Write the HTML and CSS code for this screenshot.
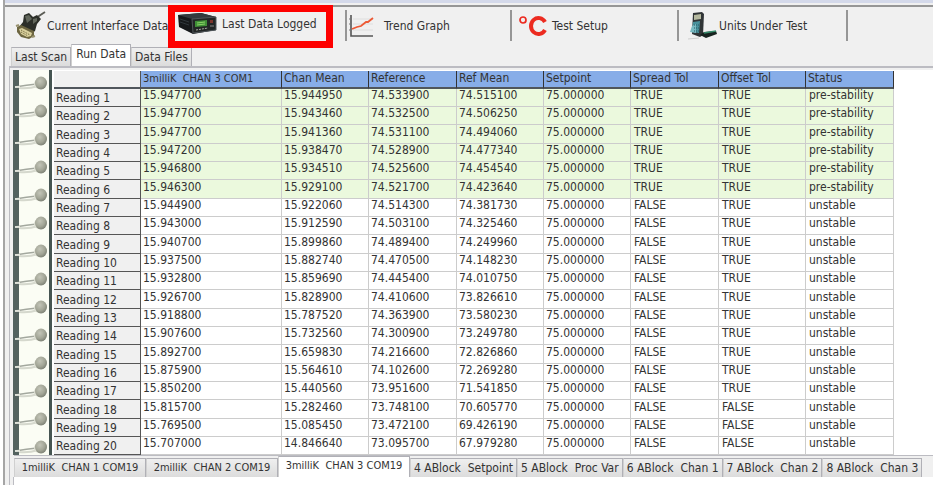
FILE: index.html
```html
<!DOCTYPE html>
<html lang="en">
<head>
<meta charset="utf-8">
<title>Run Data</title>
<link rel="stylesheet" href="styles.css">
</head>
<body>
<main class="window">
  <nav class="toolbar" aria-label="Views">
    <button class="tool tool-first" type="button">
      <svg width="32" height="30" viewBox="0 0 32 30" aria-hidden="true">
        <path d="M21 9 24 5 30 1" fill="none" stroke="#5b5c55" stroke-width="1.8"/>
        <path d="M9 4 14 2 18 6 22 4 26 8 22 13 20 20 16 23 4 16 8 11Z" fill="#2c2f29"/>
        <path d="M10 5 14 4 17 8 12 12Z" fill="#62675c"/>
        <path d="M18 8 22 7 22 10 18 13Z" fill="#62675c"/>
        <path d="M2 16 6 14 19 20 19 25 14 28 6 26 2 21Z" fill="#6d6641"/>
        <path d="M4 18 7 17 17 22 16 25 12 26 6 23Z" fill="#d8cf9c"/>
        <path d="M6 19 15 24M6 21 13 25" stroke="#6a6138" stroke-dasharray="1 1"/>
        <path d="M1 15 4 14M17 26l3-1" stroke="#98926f" stroke-width="2"/>
      </svg>
      <span>Current Interface Data</span>
    </button>
    <button class="tool tool-logged" type="button">
      <svg width="40" height="22" viewBox="0 0 40 22" aria-hidden="true">
        <path d="M1 2 24 0 39 4 39 17 16 21 2 14Z" fill="#16191b"/>
        <path d="M1 2 24 0 39 4 15 6Z" fill="#343a3e"/>
        <path d="M15 6 39 4 39 17 16 20Z" fill="#222625" stroke="#50565a"/>
        <path d="M18 8 30 7 30 13 18 14Z" fill="#3f8f36"/>
        <path d="M20 10 28 9M20 12 28 11" stroke="#8ad266"/>
        <path d="M19 17 31 15" stroke="#a7aaa0" stroke-dasharray="2 1"/>
        <path d="M33 7h3v3h-3z" fill="#7c342a"/>
        <path d="M33 13h4" stroke="#888"/>
        <path d="M3 6 12 9M3 9 12 12" stroke="#30383c"/>
      </svg>
      <span>Last Data Logged</span>
    </button>
    <button class="tool tool-graph" type="button">
      <svg width="26" height="24" viewBox="0 0 26 24" aria-hidden="true">
        <path d="M4 5H24M4 10H24M4 16H24" stroke="#dedede"/>
        <path d="M2 1V22H24" fill="none" stroke="#555" stroke-width="1.6"/>
        <path d="M0 5H2M0 10H2M0 16H2" stroke="#777"/>
        <path d="M3 15 8 13 12 12 17 8 19 8 24 4" fill="none" stroke="#ed5a36" stroke-width="1.8"/>
      </svg>
      <span>Trend Graph</span>
    </button>
    <button class="tool tool-setup" type="button">
      <svg width="30" height="22" viewBox="0 0 30 22" aria-hidden="true">
        <circle cx="5" cy="5" r="3" fill="none" stroke="#ec2b20" stroke-width="1.7"/>
        <path d="M27 7A7.5 8 0 1 0 27 15" fill="none" stroke="#ec2b20" stroke-width="4"/>
      </svg>
      <span>Test Setup</span>
    </button>
    <button class="tool tool-units" type="button">
      <svg width="32" height="30" viewBox="0 0 32 30" aria-hidden="true">
        <path d="M1 28 12 27" stroke="#cfcfcf"/>
        <path d="M6 2 15 1 17 3 16 24 13 26 5 23Z" fill="#303436"/>
        <path d="M7 4 14 3 14 8 7 9Z" fill="#b5b99f"/>
        <path d="M6 11 13 10 12 22 5 21Z" fill="#47909b"/>
        <path d="M5 15 9 13 9 22 3 21Z" fill="#79bac2"/>
        <path d="M7 14h5M7 17h5M7 20h5" stroke="#245b66" stroke-dasharray="1 1"/>
        <path d="M13 24 17 21 29 20 30 23 19 27Z" fill="#17231f"/>
        <path d="M17 22 29 20" stroke="#368a6b" stroke-width="1.5"/>
      </svg>
      <span>Units Under Test</span>
    </button>
    <div class="highlight"></div>
  </nav>

  <div class="tabs tabs-top" role="tablist">
    <button class="tab" type="button" role="tab">Last Scan</button>
    <button class="tab active" type="button" role="tab" aria-selected="true">Run Data</button>
    <button class="tab" type="button" role="tab">Data Files</button>
  </div>

  <section class="panel">
    <div class="sheet">
      <svg class="binder" aria-hidden="true">
        <defs>
          <radialGradient id="ball" cx="40%" cy="35%" r="70%">
            <stop offset="0" stop-color="#c3c5b8"/>
            <stop offset="0.6" stop-color="#a2a596"/>
            <stop offset="1" stop-color="#787c70"/>
          </radialGradient>
          <pattern id="ring" width="39" height="28" patternUnits="userSpaceOnUse">
            <rect width="39" height="28" fill="#fbfdf4"/>
            <rect width="6" height="28" fill="#53625f"/>
            <rect x="36" width="3" height="28" fill="#465552"/>
            <path d="M6 18Q16 19 25 16" fill="none" stroke="#d5d8cd" stroke-width="2"/>
            <path d="M2 17Q14 15 24 14" fill="none" stroke="#a3a89e" stroke-width="1.5"/>
            <path d="M2 17H7" stroke="#f5f7ef" stroke-width="1.5"/>
            <ellipse cx="26" cy="14" rx="5" ry="5" fill="#dcded2"/>
            <ellipse cx="28" cy="13" rx="6" ry="6.5" fill="url(#ball)"/>
          </pattern>
        </defs>
        <rect width="39" height="100%" fill="url(#ring)"/>
      </svg>
      <table class="grid">
        <colgroup><col class="c-name"><col class="c-chan"><col class="c-a"><col class="c-b"><col class="c-a"><col class="c-a"><col class="c-b"><col class="c-a"><col class="c-b"></colgroup>
        <thead><tr><td></td><th class="channel" scope="col">3milliK  CHAN 3 COM1</th><th scope="col">Chan Mean</th><th scope="col">Reference</th><th scope="col">Ref Mean</th><th scope="col">Setpoint</th><th scope="col">Spread Tol</th><th scope="col">Offset Tol</th><th scope="col">Status</th></tr></thead>
        <tbody>
        <tr class="ok"><th scope="row">Reading 1</th><td>15.947700</td><td>15.944950</td><td>74.533900</td><td>74.515100</td><td>75.000000</td><td>TRUE</td><td>TRUE</td><td>pre-stability</td></tr>
        <tr class="ok"><th scope="row">Reading 2</th><td>15.947700</td><td>15.943460</td><td>74.532500</td><td>74.506250</td><td>75.000000</td><td>TRUE</td><td>TRUE</td><td>pre-stability</td></tr>
        <tr class="ok"><th scope="row">Reading 3</th><td>15.947700</td><td>15.941360</td><td>74.531100</td><td>74.494060</td><td>75.000000</td><td>TRUE</td><td>TRUE</td><td>pre-stability</td></tr>
        <tr class="ok"><th scope="row">Reading 4</th><td>15.947200</td><td>15.938470</td><td>74.528900</td><td>74.477340</td><td>75.000000</td><td>TRUE</td><td>TRUE</td><td>pre-stability</td></tr>
        <tr class="ok"><th scope="row">Reading 5</th><td>15.946800</td><td>15.934510</td><td>74.525600</td><td>74.454540</td><td>75.000000</td><td>TRUE</td><td>TRUE</td><td>pre-stability</td></tr>
        <tr class="ok"><th scope="row">Reading 6</th><td>15.946300</td><td>15.929100</td><td>74.521700</td><td>74.423640</td><td>75.000000</td><td>TRUE</td><td>TRUE</td><td>pre-stability</td></tr>
        <tr><th scope="row">Reading 7</th><td>15.944900</td><td>15.922060</td><td>74.514300</td><td>74.381730</td><td>75.000000</td><td>FALSE</td><td>TRUE</td><td>unstable</td></tr>
        <tr><th scope="row">Reading 8</th><td>15.943000</td><td>15.912590</td><td>74.503100</td><td>74.325460</td><td>75.000000</td><td>FALSE</td><td>TRUE</td><td>unstable</td></tr>
        <tr><th scope="row">Reading 9</th><td>15.940700</td><td>15.899860</td><td>74.489400</td><td>74.249960</td><td>75.000000</td><td>FALSE</td><td>TRUE</td><td>unstable</td></tr>
        <tr><th scope="row">Reading 10</th><td>15.937500</td><td>15.882740</td><td>74.470500</td><td>74.148230</td><td>75.000000</td><td>FALSE</td><td>TRUE</td><td>unstable</td></tr>
        <tr><th scope="row">Reading 11</th><td>15.932800</td><td>15.859690</td><td>74.445400</td><td>74.010750</td><td>75.000000</td><td>FALSE</td><td>TRUE</td><td>unstable</td></tr>
        <tr><th scope="row">Reading 12</th><td>15.926700</td><td>15.828900</td><td>74.410600</td><td>73.826610</td><td>75.000000</td><td>FALSE</td><td>TRUE</td><td>unstable</td></tr>
        <tr><th scope="row">Reading 13</th><td>15.918800</td><td>15.787520</td><td>74.363900</td><td>73.580230</td><td>75.000000</td><td>FALSE</td><td>TRUE</td><td>unstable</td></tr>
        <tr><th scope="row">Reading 14</th><td>15.907600</td><td>15.732560</td><td>74.300900</td><td>73.249780</td><td>75.000000</td><td>FALSE</td><td>TRUE</td><td>unstable</td></tr>
        <tr><th scope="row">Reading 15</th><td>15.892700</td><td>15.659830</td><td>74.216600</td><td>72.826860</td><td>75.000000</td><td>FALSE</td><td>TRUE</td><td>unstable</td></tr>
        <tr><th scope="row">Reading 16</th><td>15.875900</td><td>15.564610</td><td>74.102600</td><td>72.269280</td><td>75.000000</td><td>FALSE</td><td>TRUE</td><td>unstable</td></tr>
        <tr><th scope="row">Reading 17</th><td>15.850200</td><td>15.440560</td><td>73.951600</td><td>71.541850</td><td>75.000000</td><td>FALSE</td><td>TRUE</td><td>unstable</td></tr>
        <tr><th scope="row">Reading 18</th><td>15.815700</td><td>15.282460</td><td>73.748100</td><td>70.605770</td><td>75.000000</td><td>FALSE</td><td>FALSE</td><td>unstable</td></tr>
        <tr><th scope="row">Reading 19</th><td>15.769500</td><td>15.085450</td><td>73.472100</td><td>69.426190</td><td>75.000000</td><td>FALSE</td><td>FALSE</td><td>unstable</td></tr>
        <tr><th scope="row">Reading 20</th><td>15.707000</td><td>14.846640</td><td>73.095700</td><td>67.979280</td><td>75.000000</td><td>FALSE</td><td>FALSE</td><td>unstable</td></tr>
        </tbody>
      </table>
    </div>
    <div class="tabs tabs-bottom" role="tablist">
      <button class="tab channel" type="button" role="tab">1milliK  CHAN 1 COM19</button>
      <button class="tab channel" type="button" role="tab">2milliK  CHAN 2 COM19</button>
      <button class="tab channel active" type="button" role="tab" aria-selected="true">3milliK  CHAN 3 COM19</button>
      <button class="tab" type="button" role="tab">4 ABlock  Setpoint</button>
      <button class="tab" type="button" role="tab">5 ABlock  Proc Var</button>
      <button class="tab" type="button" role="tab">6 ABlock  Chan 1</button>
      <button class="tab" type="button" role="tab">7 ABlock  Chan 2</button>
      <button class="tab" type="button" role="tab">8 ABlock  Chan 3</button>
    </div>
    <div class="page"></div>
  </section>
</main>
</body>
</html>
```
FILE: styles.css
```css
* { box-sizing: border-box; }

body {
  margin: 0;
  min-height: 100vh;
  display: flex;
  padding: 0 7px 0 3px;
  background: #fff;
  font: 12px/16px "DejaVu Sans Condensed", "DejaVu Sans", sans-serif;
  color: #333;
}

button {
  font: inherit;
  color: inherit;
  border: 0;
  padding: 0;
  background: none;
  white-space: pre;
}

.window {
  flex: 1;
  min-width: 0;
  display: flex;
  flex-direction: column;
  border-left: 2px solid #a5a5a5;
  background: #f0f0f0;
}

.window::before {
  content: "";
  height: 7px;
  background: linear-gradient(#d4d9ea 3px, #f0f0f0 3px, #f0f0f0 5px, #969696 5px);
}

.toolbar {
  position: relative;
  display: flex;
  height: 37px;
  padding-top: 3px;
}

.tool {
  display: flex;
  align-items: center;
  height: 31px;
  border-right: 2px solid #969696;
}

.tool-first { width: 170px; padding-left: 10px; border: 0; }
.tool-logged { width: 172px; padding: 0 0 4px 2px; gap: 5px; }
.tool-graph { width: 165px; padding-left: 2px; gap: 9px; }
.tool-setup { width: 167px; padding-left: 6px; gap: 4px; }
.tool-units { width: 169px; padding-left: 8px; }

.tool svg { flex: none; }

.highlight {
  position: absolute;
  left: 163px;
  top: -2px;
  width: 165px;
  height: 43px;
  border: 7px solid #fe0000;
}

.tabs {
  display: flex;
  align-items: flex-end;
}

.tab {
  height: 19px;
  border: 1px solid #b0b0b6;
  border-left-color: #d0d0d0;
  border-bottom: 0;
  background: linear-gradient(#efefef, #dcdcdc);
}

.tab.active {
  height: 22px;
  padding-bottom: 3px;
  background: #fff;
}

.tabs-top { padding-left: 6px; }
.tabs-top .tab { padding-left: 3px; padding-right: 3px; }
.tabs-top .active { padding-left: 4px; padding-right: 4px; }

.panel {
  flex: 1;
  display: flex;
  flex-direction: column;
  margin-left: 4px;
  padding-top: 2px;
  border-top: 2px solid #bcbcc2;
  border-left: 1px solid #bcbcc2;
}

.sheet {
  display: flex;
  margin-left: 3px;
  background: #fff;
}

.binder {
  flex: none;
  width: 39px;
  height: auto;
  margin-right: 2px;
}

.grid {
  width: 840px;
  margin-top: 1px;
  table-layout: fixed;
  border-collapse: separate;
  border-spacing: 0;
}

.c-name { width: 87px; }
.c-chan { width: 141px; }
.c-a { width: 87px; }
.c-b { width: 88px; }

.grid tr { height: 18px; }
.grid tbody tr:nth-child(3n) { height: 19px; }

.grid th,
.grid td {
  padding: 0 0 4px 2px;
  line-height: 13px;
  font-weight: normal;
  text-align: left;
  white-space: pre;
  border-right: 1px solid #ccc;
  border-bottom: 1px solid #ccc;
}

.grid thead th {
  background: #87ade8;
  border-right-color: #333;
  border-bottom: 2px solid #50565c;
  padding-bottom: 2px;
}

.grid thead td {
  background: #f0f0f0;
  border-right-color: #555;
  border-bottom: 2px solid #50565c;
}

.grid tbody th {
  padding: 2px 0 0 2px;
  background: #f0f0f0;
  border-right: 1px solid #555;
  border-bottom: 1px solid #555;
}

.grid .ok td { background: #ebf9dd; }
.grid tbody td:nth-of-type(n+6) { padding-left: 3px; }

.grid .channel,
.tab.channel { font-size: 11px; }

.tabs-bottom {
  margin-left: 4px;
  border-top: 1px solid #bcbcc2;
}

.tabs-bottom .tab { padding-left: 3px; padding-right: 3px; }
.tabs-bottom .channel { flex: 0 0 132px; }
.tabs-bottom .active { height: 21px; }

.page {
  flex: 1;
  min-height: 7px;
  margin-left: 3px;
  background: #fff;
  border-left: 1px solid #bcbcc2;
}
```
